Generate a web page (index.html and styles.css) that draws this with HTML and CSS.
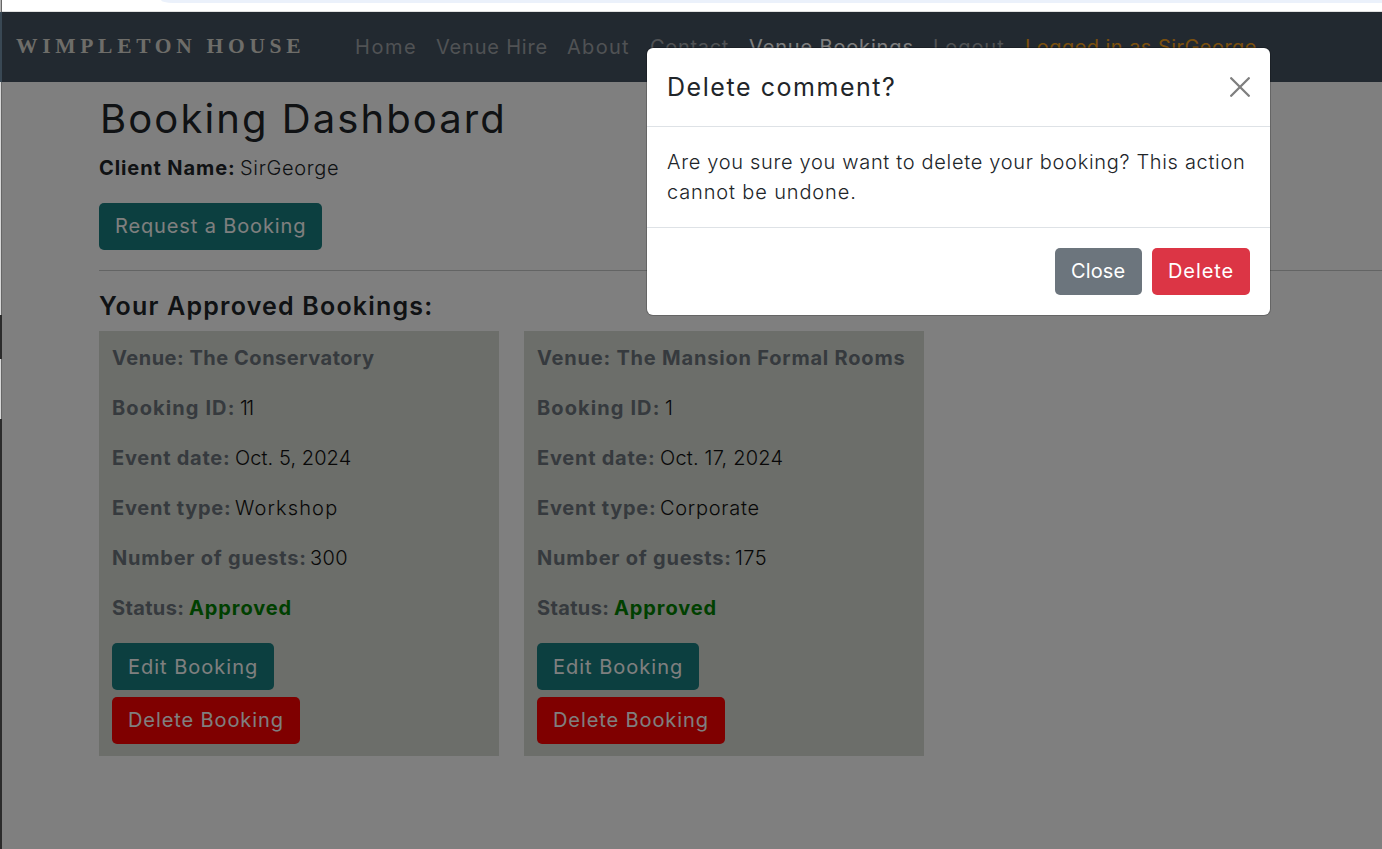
FILE: index.html
```html
<!DOCTYPE html>
<html lang="en">
<head>
<meta charset="utf-8">
<title>Booking Dashboard</title>
<link rel="stylesheet" href="styles.css">
</head>
<body>
<div class="browser-bar"><div class="address"></div></div>
<div class="page">
  <nav class="navbar">
    <a class="brand">WIMPLETON HOUSE</a>
    <div class="links">
      <a class="link home">Home</a>
      <a class="link hire">Venue Hire</a>
      <a class="link about">About</a>
      <a class="link contact">Contact</a>
      <a class="link bookings active">Venue Bookings</a>
      <a class="link logout">Logout</a>
      <a class="link user">Logged in as SirGeorge</a>
    </div>
  </nav>
  <main class="content">
    <h1 class="title">Booking Dashboard</h1>
    <p class="client"><strong class="client-key">Client Name:</strong><span class="client-value">SirGeorge</span></p>
    <a class="btn btn-teal request">Request a Booking</a>
    <hr class="rule">
    <h2 class="subtitle">Your Approved Bookings:</h2>
    <div class="cards">
      <section class="card">
        <p class="row"><b class="venue-a">Venue: The Conservatory</b></p>
        <p class="row"><b class="k-id">Booking ID:</b><span class="ones">11</span></p>
        <p class="row"><b class="k-date">Event date:</b><span class="date">Oct. 5, 2024</span></p>
        <p class="row"><b class="k-type">Event type:</b><span class="workshop">Workshop</span></p>
        <p class="row"><b class="k-guests">Number of guests:</b><span class="num">300</span></p>
        <p class="row"><b class="k-status">Status:</b><b class="approved">Approved</b></p>
        <a class="btn btn-teal edit">Edit Booking</a>
        <a class="btn btn-red remove">Delete Booking</a>
      </section>
      <section class="card">
        <p class="row"><b class="venue-b">Venue: The Mansion Formal Rooms</b></p>
        <p class="row"><b class="k-id">Booking ID:</b><span class="ones">1</span></p>
        <p class="row"><b class="k-date">Event date:</b><span class="date-b">Oct. 17, 2024</span></p>
        <p class="row"><b class="k-type">Event type:</b><span class="corporate">Corporate</span></p>
        <p class="row"><b class="k-guests">Number of guests:</b><span class="num">175</span></p>
        <p class="row"><b class="k-status">Status:</b><b class="approved">Approved</b></p>
        <a class="btn btn-teal edit">Edit Booking</a>
        <a class="btn btn-red remove">Delete Booking</a>
      </section>
    </div>
  </main>
  <div class="backdrop"></div>
</div>
<div class="window-edge"><i class="edge-top"></i><i class="edge-nav"></i><i class="edge-light"></i><i class="edge-dark"></i><i class="edge-light short"></i><i class="edge-dark rest"></i></div>
<div class="modal" role="dialog">
  <header class="modal-head">
    <h2 class="modal-title">Delete comment?</h2>
    <svg class="close" viewBox="0 0 20 20" width="20" height="20"><path d="M1.2 1.2 18.8 18.8M18.8 1.2 1.2 18.8" fill="none" stroke="#7f7f7f" stroke-width="2.3" stroke-linecap="round"/></svg>
  </header>
  <div class="modal-body">Are you sure you want to delete your booking? This action<br><span class="line-two">cannot be undone.</span></div>
  <footer class="modal-foot">
    <a class="btn btn-grey">Close</a>
    <a class="btn btn-danger">Delete</a>
  </footer>
</div>
</body>
</html>
```
FILE: styles.css
```css
* { box-sizing: border-box; }
body {
  margin: 0;
  height: 849px;
  overflow: hidden;
  display: flex;
  flex-direction: column;
  background: #fff;
  color: #212529;
  font: 300 20px/30px Inter, "Open Sans", sans-serif;
  letter-spacing: .67px;
}
p, h1, h2 { margin: 0; }
strong, b { font-weight: 700; }

.browser-bar { flex: none; height: 12px; padding-left: 161px; border-bottom: 1px solid #e0e0e0; }
.address { height: 3px; background: #ebf1fb; border-bottom-left-radius: 12px 3px; }
.page { position: relative; flex: 1; }
.backdrop { position: absolute; inset: 0; background: rgba(0, 0, 0, .5); }

.navbar { height: 70px; display: flex; align-items: center; padding-left: 16px; background: #445260; }
.brand {
  width: 339px;
  padding-bottom: 2px;
  color: #dcdad2;
  font: 700 21.5px/30px "Liberation Serif", serif;
  letter-spacing: 4.7px;
  white-space: nowrap;
}
.links { display: flex; font-weight: 400; color: #a0a4a9; white-space: nowrap; }
.home { width: 81px; letter-spacing: 1.55px; }
.hire { width: 131px; letter-spacing: .8px; }
.about { width: 83px; letter-spacing: 1.3px; }
.contact { width: 99px; }
.bookings { width: 184px; letter-spacing: .85px; }
.logout { width: 92px; letter-spacing: .95px; }
.active { color: #fff; }
.user { color: #f7a11b; letter-spacing: .45px; }

.content { padding: 13px 0 0 99px; }
.title { padding-left: 1px; font-size: 40px; line-height: 48px; font-weight: 400; letter-spacing: 2.08px; }
.client { display: flex; margin-top: 10px; margin-bottom: 20px; white-space: nowrap; }
.client-key { width: 141px; letter-spacing: .9px; }
.btn {
  display: block;
  height: 47px;
  padding-left: 16px;
  border-radius: 5px;
  color: #fff;
  font-weight: 400;
  line-height: 47px;
  white-space: nowrap;
}
.btn-teal { background: #187e80; }
.btn-red { background: #f00; }
.request { width: 223px; letter-spacing: .87px; }
.rule { height: 1px; margin: 20px 0; border: 0; background: #c7c8c9; }
.subtitle { font-size: 25px; line-height: 30px; font-weight: 600; letter-spacing: 1.2px; }
.cards { display: flex; gap: 25px; margin-top: 10px; }
.card { width: 400px; height: 425px; padding: 12px 13px; background: #d8dcd4; color: #111; }
.row { display: flex; margin-bottom: 20px; white-space: nowrap; }
.row b { color: #6c757d; }
.venue-a { letter-spacing: .52px; }
.venue-b { letter-spacing: .8px; }
.k-id { width: 128px; letter-spacing: 1.1px; }
.k-date, .k-type { width: 123px; letter-spacing: .75px; }
.k-guests { width: 198px; letter-spacing: .77px; }
.k-status { width: 77px; letter-spacing: .35px; }
.row .approved { color: #008000; letter-spacing: .9px; }
.ones { letter-spacing: -1.5px; }
.date { letter-spacing: .08px; }
.date-b { letter-spacing: .2px; }
.workshop { letter-spacing: 1.15px; }
.corporate { letter-spacing: .72px; }
.num { letter-spacing: .4px; }
.edit { width: 162px; line-height: 48px; letter-spacing: 1px; }
.remove { width: 188px; margin-top: 7px; letter-spacing: .9px; }

.modal {
  position: absolute;
  left: 647px;
  top: 48px;
  width: 623px;
  height: 267px;
  border-radius: 6px;
  background: #fff;
  box-shadow: 0 0 0 1px rgba(0, 0, 0, .2);
}
.modal-head { height: 79px; padding: 0 20px; display: flex; align-items: center; justify-content: space-between; border-bottom: 1px solid #dee2e6; }
.modal-title { font-size: 25px; line-height: 38px; font-weight: 400; letter-spacing: 1.55px; }
.modal-body { height: 100px; padding: 20px; white-space: nowrap; letter-spacing: .68px; }
.line-two { letter-spacing: .86px; }
.modal-foot { display: flex; justify-content: flex-end; gap: 10px; padding: 20px; border-top: 1px solid #dee2e6; }
.btn-grey { width: 87px; background: #6c757d; letter-spacing: .1px; }
.btn-danger { width: 98px; background: #dc3545; letter-spacing: .9px; }

.window-edge { position: absolute; left: 0; top: 0; width: 2px; height: 849px; display: flex; flex-direction: column; }
.edge-top { height: 12px; background: linear-gradient(90deg, #b4b4b4 50%, #666 50%); }
.edge-nav { height: 70px; background: #394854; }
.edge-light { height: 233px; background: linear-gradient(90deg, #d8d8d8 50%, #666 50%); }
.edge-dark { height: 44px; background: #2b2b2b; }
.short { height: 60px; }
.rest { height: 430px; }
```
